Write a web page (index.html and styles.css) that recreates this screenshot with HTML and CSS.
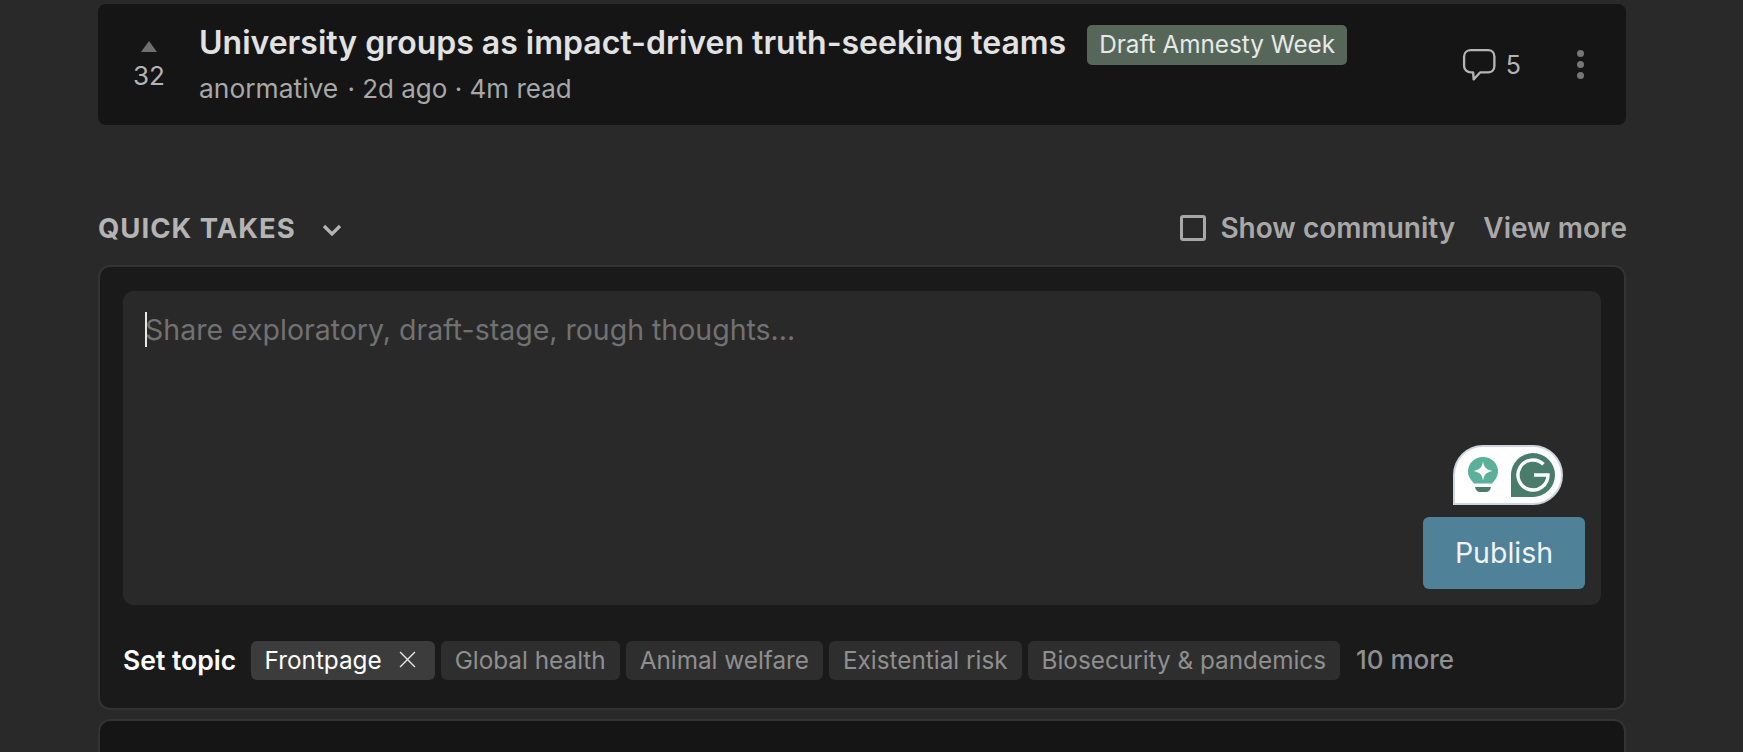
FILE: index.html
```html
<!DOCTYPE html>
<html lang="en">
<head>
<meta charset="UTF-8" />
<title>Quick takes</title>
<link rel="stylesheet" href="styles.css">
</head>
<body>
  <main class="feed">
    <article class="post">
      <div class="vote">
        <span class="vote-arrow"></span>
        <span class="vote-count">32</span>
      </div>
      <div class="post-main">
        <div class="post-title-row">
          <span class="post-title">University groups as impact-driven truth-seeking teams</span>
          <span class="post-tag">Draft Amnesty Week</span>
        </div>
        <div class="post-meta"><span class="post-author">anormative</span> &nbsp;· 2d ago · 4m read</div>
      </div>
      <div class="post-actions">
        <svg class="comment-icon" viewBox="0 0 32 32" fill="none" stroke="#b4b4b4" stroke-width="2.2" stroke-linejoin="round">
          <path d="M8 2h16c3.5 0 6 2.2 6 6v9c0 3.6-2.5 6-6 6h-7.5L10.500 29.500 10 23H8c-3.500 0-6.500-2.400-6.500-6V8C1.500 4.200 4.500 2 8 2z"/>
        </svg>
        <span class="comment-count">5</span>
        <span class="dots"><i></i><i></i><i></i></span>
      </div>
    </article>

    <section class="takes">
      <div class="takes-head">
        <h2 class="takes-title">Quick takes</h2>
        <svg class="chevron" viewBox="0 0 20 12" fill="none" stroke="#b4b4b4" stroke-width="3.2">
          <path d="M2 2l8 8 8-8"/>
        </svg>
        <label class="show-community"><span class="checkbox"></span>Show community</label>
        <a class="view-more">View more</a>
      </div>

      <div class="takes-box">
        <div class="editor">
          <div class="placeholder"><span class="caret"></span>Share exploratory, draft-stage, rough thoughts...</div>
          <div class="editor-foot">
            <div class="grammarly">
              <svg class="bulb" viewBox="0 0 32 38">
                <path d="M16 1C7.700 1 1 7.400 1 15.300c0 5.300 2.900 8.700 6 12.200h18c3.100-3.500 6-6.900 6-12.200C31 7.400 24.300 1 16 1z" fill="#5bb09a"/>
                <path d="M16 5.500c1.300 6.300 3.200 8.200 9.500 9.500-6.300 1.300-8.200 3.200-9.500 9.500-1.300-6.300-3.200-8.200-9.500-9.500 6.300-1.300 8.200-3.200 9.500-9.500z" fill="#fff"/>
                <path d="M8 31h16c-.5 3-2.500 5-5 5h-6c-2.500 0-4.500-2-5-5z" fill="#4a7c6b"/>
              </svg>
              <svg class="g-logo" viewBox="0 0 44 44">
                <path d="M22 0a22 22 0 0 1 0 44H0V22A22 22 0 0 1 22 0z" fill="#4a7c6b"/>
                <path d="M32.500 11.300A15 15 0 1 0 37 22H23" fill="none" stroke="#fff" stroke-width="3.400"/>
              </svg>
            </div>
            <button class="publish">Publish</button>
          </div>
        </div>
        <div class="topics">
          <span class="topics-label">Set topic</span>
          <span class="chip chip-active">Frontpage
            <svg class="chip-x" viewBox="0 0 16 16" stroke="#e6e6e6" stroke-width="1.300"><path d="M1 1l14 14M15 1L1 15"/></svg>
          </span>
          <span class="chip">Global health</span>
          <span class="chip">Animal welfare</span>
          <span class="chip">Existential risk</span>
          <span class="chip">Biosecurity &amp; pandemics</span>
          <span class="more-topics">10 more</span>
        </div>
      </div>
    </section>

    <div class="next-card"></div>
  </main>
</body>
</html>
```

FILE: styles.css
```css
* {
  box-sizing: border-box;
}
html, body {
  height: 100%;
}
body {
  margin: 0;
  background: #292929;
  font-family: Inter, 'Liberation Sans', sans-serif;
  overflow: hidden;
}

.feed {
  width: 1528px;
  margin-left: 98px;
  padding-top: 4px;
}

/* post row */
.post {
  display: flex;
  align-items: center;
  height: 121px;
  background: #151515;
  border-radius: 8px;
  padding-right: 34px;
}
.vote {
  width: 102px;
  display: flex;
  flex-direction: column;
  align-items: center;
  flex-shrink: 0;
  padding-top: 2px;
  margin-right: -1px;
}
.vote-arrow {
  width: 0;
  height: 0;
  border-left: 8px solid transparent;
  border-right: 8px solid transparent;
  border-bottom: 11px solid #6f6f6f;
  margin-bottom: 9px;
}
.vote-count {
  font-size: 26px;
  line-height: 30px;
  color: #b4b4b4;
}
.post-main {
  flex: 1;
}
.post-title-row {
  display: flex;
  align-items: center;
  gap: 21px;
  height: 42px;
  margin-top: -3px;
}
.post-title {
  font-size: 32px;
  font-weight: 600;
  color: #e2e2e2;
  white-space: nowrap;
}
.post-tag {
  background: #56675a;
  color: #e8e8e8;
  font-size: 24.300px;
  line-height: 38px;
  padding: 0 12px 2px;
  margin-top: 6px;
  border-radius: 5px;
  white-space: nowrap;
}
.post-meta {
  font-size: 26px;
  line-height: 32px;
  margin-top: 9px;
  color: #a8a8a8;
}
.post-author {
  font-size: 26.400px;
  margin-right: -5.500px;
}
.post-actions {
  display: flex;
  align-items: center;
}
.comment-icon {
  width: 35px;
  height: 34px;
}
.comment-count {
  font-size: 25px;
  color: #b4b4b4;
  margin-left: 9px;
}
.dots {
  display: flex;
  flex-direction: column;
  gap: 4px;
  margin-left: 56px;
  margin-right: 8px;
}
.dots i {
  display: block;
  width: 7px;
  height: 7px;
  border-radius: 50%;
  background: #777;
}

/* quick takes */
.takes {
  margin-top: 83px;
}
.takes-head {
  display: flex;
  align-items: center;
  height: 40px;
  margin-bottom: 17px;
}
.takes-title {
  margin: 0;
  font-size: 27.500px;
  font-weight: 700;
  letter-spacing: 1px;
  text-transform: uppercase;
  color: #b4b4b4;
}
.chevron {
  width: 20px;
  height: 12px;
  margin: 4px 0 0 26px;
}
.show-community {
  margin-left: auto;
  display: flex;
  align-items: center;
  font-size: 28px;
  font-weight: 600;
  color: #a8a8a8;
}
.checkbox {
  width: 26px;
  height: 26px;
  border: 3px solid #a8a8a8;
  border-radius: 3px;
  margin-right: 14px;
}
.view-more {
  margin-left: 28px;
  margin-right: -1px;
  font-size: 28px;
  font-weight: 600;
  color: #a8a8a8;
}
.takes-box {
  height: 445px;
  background: #1a1a1a;
  border: 2px solid #333;
  border-radius: 12px;
  padding: 24px 23px 0;
}
.editor {
  height: 314px;
  background: #292929;
  border-radius: 10px;
  padding: 21px 16px 16px 22px;
  display: flex;
  flex-direction: column;
}
.placeholder {
  font-size: 28.500px;
  line-height: 36px;
  color: #717171;
  position: relative;
}
.caret {
  position: absolute;
  left: 0;
  top: 0;
  width: 2px;
  height: 35px;
  background: #e8e8e8;
}
.editor-foot {
  margin-top: auto;
  display: flex;
  flex-direction: column;
  align-items: flex-end;
}
.grammarly {
  display: flex;
  align-items: center;
  justify-content: space-between;
  width: 110px;
  height: 60px;
  margin-right: 22px;
  margin-bottom: 12px;
  padding: 0 6px 0 12px;
  background: #fff;
  border: 2px solid #d0d4e0;
  border-radius: 30px 30px 30px 0;
}
.bulb {
  width: 32px;
  height: 38px;
}
.g-logo {
  width: 44px;
  height: 44px;
}
.publish {
  width: 162px;
  height: 72px;
  padding: 0 0 2px;
  background: #4f8299;
  color: #f2f2f2;
  border: none;
  border-radius: 6px;
  font-family: inherit;
  font-size: 28.500px;
}
.topics {
  display: flex;
  align-items: center;
  gap: 6px;
  margin-top: 36px;
}
.topics-label {
  font-size: 26.500px;
  font-weight: 600;
  color: #fff;
  margin-right: 8.500px;
  margin-bottom: 2px;
}
.chip {
  display: flex;
  align-items: center;
  height: 39px;
  padding: 0 14px 2px;
  background: #2e2e2e;
  color: #8f8f8f;
  font-size: 24.300px;
  border-radius: 6px;
}
.chip-active {
  background: #3c3c3c;
  color: #fff;
}
.chip-x {
  width: 17px;
  height: 17px;
  margin-left: 17px;
  margin-right: 5px;
}
.more-topics {
  margin-left: 10px;
  margin-bottom: 2px;
  font-size: 26px;
  font-weight: 500;
  color: #8f8f8f;
}

.next-card {
  height: 60px;
  margin-top: 9px;
  background: #151515;
  border: 2px solid #333;
  border-bottom: none;
  border-radius: 12px 12px 0 0;
}
```
